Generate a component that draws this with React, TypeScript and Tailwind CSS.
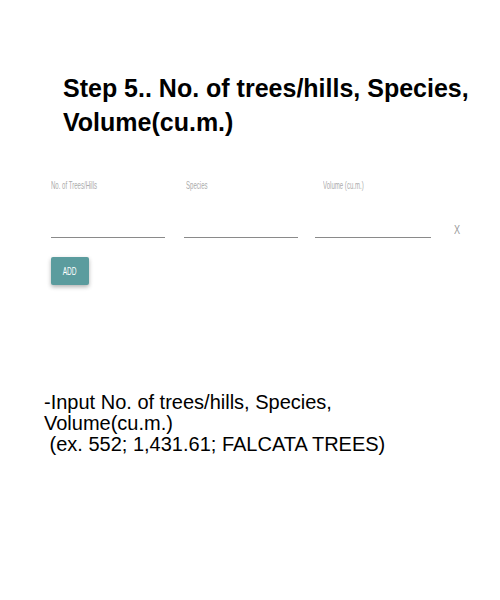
export default function App() {
  return (
    <div className="w-[500px] h-[600px] bg-white font-['Liberation_Sans',Arial,sans-serif] text-black relative overflow-hidden">
      <h1 className="pl-[63px] pt-[71px] text-[25px] leading-[34px] font-bold">
        Step 5.. No. of trees/hills, Species,
        <br />
        Volume(cu.m.)
      </h1>

      <div className="mt-[40px] pl-[51px] flex items-end">
        <Field label="No. of Trees/Hills" width="w-[114px]" offset="ml-0" />
        <Field label="Species" width="w-[114px]" offset="ml-[2px]" className="ml-[19px]" />
        <Field label="Volume (cu.m.)" width="w-[116px]" offset="ml-[8px]" className="ml-[17px]" />
        <span className="ml-[23px] mb-[1px] text-[13px] leading-[14px] text-[#9a9a9a] inline-block origin-left scale-x-[0.7]">
          X
        </span>
      </div>

      <div className="pl-[51px] mt-[19px]">
        <button
          type="button"
          className="w-[38px] h-[28px] bg-[#5b9c9e] rounded-[2px] shadow-[0_2px_4px_rgba(0,0,0,0.3)] flex items-center justify-center"
        >
          <span className="text-white text-[11px] inline-block scale-x-[0.6]">ADD</span>
        </button>
      </div>

      <p className="pl-[44px] mt-[107px] text-[20px] leading-[21px] whitespace-pre">
        {'-Input No. of trees/hills, Species,\nVolume(cu.m.)\n (ex. 552; 1,431.61; FALCATA TREES)'}
      </p>
    </div>
  );
}

function Field({
  label,
  width,
  offset,
  className = '',
}: {
  label: string;
  width: string;
  offset: string;
  className?: string;
}) {
  return (
    <div className={`${width} ${className} flex flex-col`}>
      <label
        className={`${offset} text-[11px] leading-[12px] text-[#ababab] whitespace-nowrap inline-block origin-left scale-x-[0.55]`}
      >
        {label}
      </label>
      <div className="h-[47px] border-b border-[#8a8a8a]" />
    </div>
  );
}
